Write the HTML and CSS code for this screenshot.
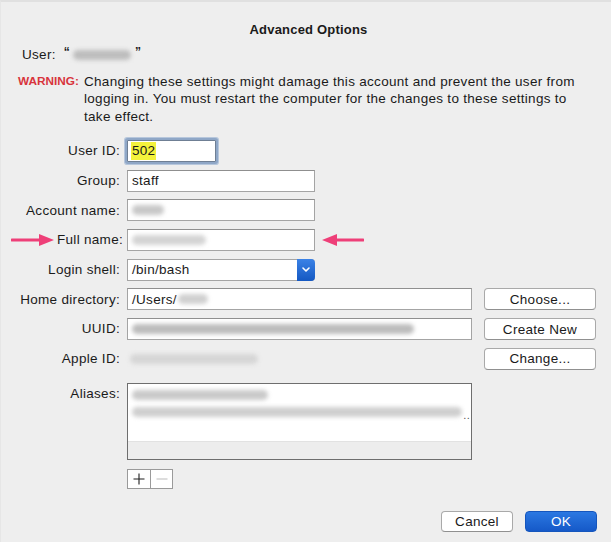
FILE: index.html
```html
<!DOCTYPE html>
<html lang="en">
<head>
    <meta charset="UTF-8">
    <meta name="viewport" content="width=device-width, initial-scale=1.0">
    <title>Advanced Options</title>
    <link rel="stylesheet" href="styles.css">
</head>
<body>
    <div class="dialog">
        <h1 class="title">Advanced Options</h1>

        <div class="user-line">
            <span>User:</span>
            <span class="quote">&ldquo;</span><span class="blur blur-user"></span><span class="quote">&rdquo;</span>
        </div>

        <div class="warning">
            <span class="warning-tag">WARNING:</span>
            <p class="warning-text">Changing these settings might damage this account and prevent the user from logging in. You must restart the computer for the changes to these settings to take effect.</p>
        </div>

        <div class="form">
            <!-- User ID -->
            <label class="label">User ID:</label>
            <div class="cell">
                <div class="field field-short focused"><span class="selected">502</span></div>
            </div>
            <div></div>

            <!-- Group -->
            <label class="label">Group:</label>
            <div class="cell">
                <div class="field field-mid">staff</div>
            </div>
            <div></div>

            <!-- Account name -->
            <label class="label">Account name:</label>
            <div class="cell">
                <div class="field field-mid"><span class="blur blur-account"></span></div>
            </div>
            <div></div>

            <!-- Full name, with the two annotation arrows -->
            <label class="label label-arrow">
                <svg class="arrow" width="44" height="14" viewBox="0 0 44 14">
                    <path d="M1 7 H30" stroke="#ee3f78" stroke-width="3.2" stroke-linecap="round"/>
                    <path d="M28 1 L43 7 L28 13 Z" fill="#ee3f78"/>
                </svg>
                Full name:
            </label>
            <div class="cell">
                <div class="field field-mid"><span class="blur blur-full"></span></div>
                <svg class="arrow arrow-back" width="42" height="14" viewBox="0 0 42 14">
                    <path d="M12 7 H41" stroke="#ee3f78" stroke-width="3.2" stroke-linecap="round"/>
                    <path d="M15 1 L0 7 L15 13 Z" fill="#ee3f78"/>
                </svg>
            </div>
            <div></div>

            <!-- Login shell -->
            <label class="label">Login shell:</label>
            <div class="cell">
                <div class="popup">
                    <span class="popup-value">/bin/bash</span>
                    <span class="popup-arrow">
                        <svg width="10" height="7" viewBox="0 0 10 7">
                            <path d="M2 2 L5 5 L8 2" fill="none" stroke="#fff" stroke-width="1.6" stroke-linecap="round" stroke-linejoin="round"/>
                        </svg>
                    </span>
                </div>
            </div>
            <div></div>

            <!-- Home directory -->
            <label class="label">Home directory:</label>
            <div class="cell">
                <div class="field field-long">/Users/<span class="blur blur-home"></span></div>
            </div>
            <button class="btn">Choose...</button>

            <!-- UUID -->
            <label class="label">UUID:</label>
            <div class="cell">
                <div class="field field-long"><span class="blur blur-uuid"></span></div>
            </div>
            <button class="btn">Create New</button>

            <!-- Apple ID -->
            <label class="label">Apple ID:</label>
            <div class="cell">
                <span class="blur blur-apple"></span>
            </div>
            <button class="btn">Change...</button>

            <!-- Aliases -->
            <label class="label label-top">Aliases:</label>
            <div class="cell cell-top">
                <div class="aliases">
                    <div class="alias-rows">
                        <div class="alias-row"><span class="blur blur-alias1"></span></div>
                        <div class="alias-row"><span class="blur blur-alias2"></span><span class="more">..</span></div>
                    </div>
                    <div class="alias-foot"></div>
                </div>
            </div>
            <div></div>

            <div></div>
            <div class="cell">
                <div class="segmented">
                    <span class="seg" title="Add">
                        <svg width="12" height="12" viewBox="0 0 12 12">
                            <path d="M6 0.5 V11.5 M0.5 6 H11.5" stroke="#1e1e1e" stroke-width="1.1"/>
                        </svg>
                    </span>
                    <span class="seg seg-off" title="Remove">
                        <svg width="12" height="12" viewBox="0 0 12 12">
                            <path d="M0.5 6 H11.5" stroke="#c2c2c2" stroke-width="1.1"/>
                        </svg>
                    </span>
                </div>
            </div>
            <div></div>
        </div>

        <div class="actions">
            <button class="btn btn-cancel">Cancel</button>
            <button class="btn btn-ok">OK</button>
        </div>
    </div>
</body>
</html>
```

FILE: styles.css
```css
:root {
    --bg: #eeeeee;
    --text: #1a1a1a;
    --field-border: #a4a4a4;
    --warning: #d8343c;
    --blue: #1b64d4;
}

* {
    box-sizing: border-box;
    margin: 0;
    padding: 0;
}

body {
    background-color: var(--bg);
    color: var(--text);
    font-family: "Liberation Sans", Arial, Helvetica, sans-serif;
    font-size: 13.5px;
    letter-spacing: 0.3px;
    line-height: 17.5px;
}

.dialog {
    width: 611px;
    height: 542px;
    border-top: 2px solid #e0e0e0;
    border-left: 1px solid #e6e6e6;
}

.title {
    font-size: 13px;
    font-weight: bold;
    letter-spacing: 0.2px;
    text-align: center;
    line-height: 16px;
    margin-top: 20px;
    padding-left: 5px;
}

.user-line {
    display: flex;
    align-items: center;
    margin-top: 8px;
    padding-left: 21px;
}

.quote {
    font-size: 12px;
    font-weight: bold;
    margin-left: 8px;
    margin-top: -4px;
}

.blur + .quote {
    margin-left: 4px;
}

.quote + .blur {
    margin-left: 3px;
}

.warning {
    display: flex;
    margin-top: 9px;
    padding-left: 17px;
}

.warning-tag {
    color: var(--warning);
    font-weight: bold;
    font-size: 11.8px;
    letter-spacing: 0;
    width: 66px;
    flex: none;
}

.warning-text {
    width: 505px;
}

/* placeholders for the blurred personal data */
.blur {
    display: inline-block;
    height: 10px;
    background-color: #bdbdbd;
    border-radius: 5px;
    filter: blur(2.2px);
    vertical-align: middle;
}

.blur-user { width: 58px; }
.blur-account { width: 32px; background-color: #c8c8c8; }
.blur-full { width: 74px; background-color: #d4d4d4; }
.blur-home { width: 30px; background-color: #d0d0d0; margin-left: 1px; }
.blur-uuid { width: 282px; background-color: #bcbcbc; }
.blur-apple { width: 128px; background-color: #d6d6d6; margin-left: 3px; }
.blur-alias1 { width: 136px; background-color: #cacaca; }
.blur-alias2 { width: 330px; background-color: #cfcfcf; }

.form {
    display: grid;
    grid-template-columns: 126px 357px 112px;
    grid-auto-rows: minmax(22px, auto);
    row-gap: 7.7px;
    margin-top: 15px;
}

.label {
    display: flex;
    align-items: center;
    justify-content: flex-end;
    padding-right: 7px;
    white-space: nowrap;
}

.label-arrow {
    justify-content: space-between;
}

.label-arrow .arrow {
    margin-right: 2px;
    margin-left: 10px;
    flex: none;
}

.label-top {
    align-items: flex-start;
    padding-top: 2px;
}

.cell {
    display: flex;
    align-items: center;
}

.cell-top {
    align-items: flex-start;
}

.field {
    height: 22px;
    background-color: #fff;
    border: 1px solid var(--field-border);
    border-top-color: #8f8f8f;
    padding: 0 4px;
    display: flex;
    align-items: center;
    white-space: nowrap;
}

.field-short { width: 89px; }
.field-mid { width: 188px; }
.field-long { width: 345px; }

.focused {
    border-color: #6f7f94;
    border-radius: 1px;
    box-shadow: 0 0 0 2px #8fa7c7, 0 0 0 3px #b7c7dc;
    padding-left: 3px;
}

.selected {
    background-color: #f4f23c;
    padding: 0 1px;
}

.arrow-back {
    margin-left: 7px;
}

.popup {
    width: 188px;
    height: 22px;
    display: flex;
    background-color: #fff;
    border: 1px solid var(--field-border);
    border-right: none;
    border-radius: 0 4px 4px 0;
}

.popup-value {
    flex: 1;
    padding-left: 4px;
    display: flex;
    align-items: center;
}

.popup-arrow {
    width: 18px;
    margin: -1px 0;
    border-radius: 0 4px 4px 0;
    background: linear-gradient(#3b82e6, #1458c2);
    display: flex;
    align-items: center;
    justify-content: center;
}

.btn {
    width: 112px;
    height: 22px;
    font-family: inherit;
    font-size: 13.5px;
    letter-spacing: 0.3px;
    color: var(--text);
    background-color: #fff;
    border: 1px solid #a9a9a9;
    border-bottom-color: #909090;
    border-radius: 4px;
    justify-self: end;
}

/* the aliases row sits a little lower than the others */
.label-top,
.cell-top {
    margin-top: 5px;
}

.aliases {
    width: 345px;
    height: 77px;
    border: 1px solid #6e6e6e;
    background-color: #fff;
    display: flex;
    flex-direction: column;
}

.alias-rows {
    flex: 1;
    padding-top: 3px;
}

.alias-row {
    height: 17px;
    display: flex;
    align-items: center;
    padding-left: 4px;
    position: relative;
}

.more {
    position: absolute;
    right: 1px;
    top: 3px;
    font-size: 11px;
    color: #555;
}

.alias-foot {
    height: 18px;
    background-color: #ededed;
    border-top: 1px solid #e2e2e2;
}

.segmented {
    display: flex;
    margin-top: 2px;
    height: 20px;
    border: 1px solid #9a9a9a;
    background-color: #fff;
}

.seg {
    width: 22px;
    display: flex;
    align-items: center;
    justify-content: center;
}

.seg + .seg {
    border-left: 1px solid #9a9a9a;
}

.actions {
    display: flex;
    justify-content: flex-end;
    gap: 12px;
    padding-right: 14px;
    margin-top: 22px;
}

.btn-cancel {
    width: 72px;
    height: 21px;
}

.btn-ok {
    width: 72px;
    height: 21px;
    color: #fff;
    border: 1px solid #1556bd;
    background: linear-gradient(#2b78e2, #1559c8);
}
```
